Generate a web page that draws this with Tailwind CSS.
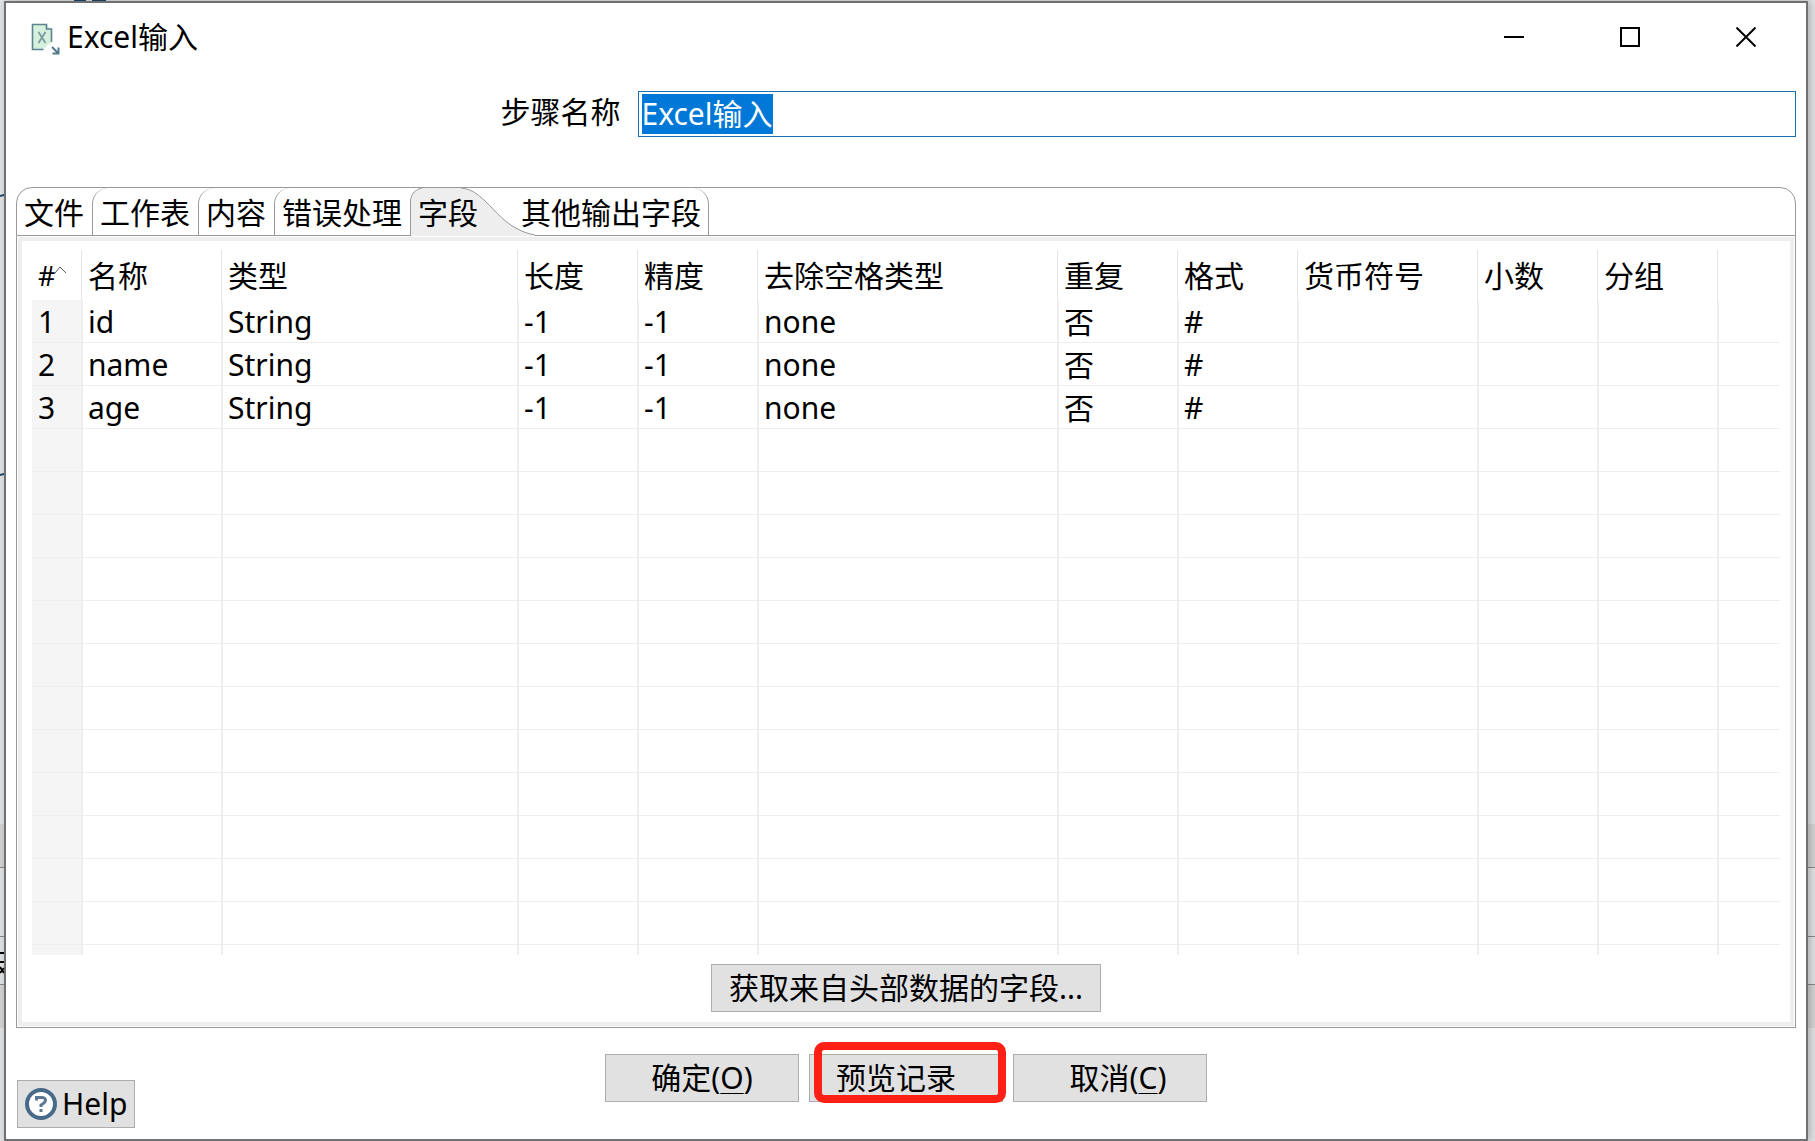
<!DOCTYPE html>
<html lang="zh-CN">
<head>
<meta charset="utf-8">
<title>Excel输入</title>
<script src="https://cdn.jsdelivr.net/npm/@tailwindcss/browser@4"></script>
</head>
<body class="relative flex min-h-screen flex-col bg-[#e2e3e5] pt-px pr-[7px] pl-1 font-['Noto_Sans','Noto_Sans_CJK_SC',sans-serif] text-[30px] leading-[40px] text-black">
  <!-- Application behind the dialog -->
  <div class="absolute inset-0 overflow-hidden" aria-hidden="true">
    <div class="absolute top-0 left-[74px] flex gap-[6px]"><span class="h-1 w-3 bg-[#1c4668]"></span><span class="h-1 w-[14px] bg-[#1c4668]"></span></div>
    <div class="absolute inset-x-0 top-[824px] h-[44px] border-b border-[#8a8a8a] bg-[#d4d4d4]"></div>
    <div class="absolute inset-x-0 top-[936px] h-[49px] border-y border-[#8a8a8a]"></div>
    <div class="absolute inset-x-0 top-[985px] h-[43px] bg-[#d4d4d4]"></div>
    <svg class="absolute top-[190px] left-0 h-[290px] w-1" viewBox="0 0 4 290" fill="none" stroke="#1c4668" stroke-width="2"><path d="M0 6L4 5M0 285L4 284"/></svg>
    <svg class="absolute top-[948px] left-0 h-7 w-1" viewBox="0 0 4 28" fill="none" stroke="#000" stroke-width="2"><path d="M0 5H4M0 14H4M0 19L4 25M0 25L4 20"/></svg>
  </div>

  <main class="relative flex flex-1 flex-col border-2 border-[#707172] bg-white shadow-[2px_0_8px_rgba(0,0,0,0.25)]">
    <header class="flex h-[68px] items-center pr-[2px] pl-[25px]">
      <svg class="mt-1 h-8 w-8 shrink-0" viewBox="0 0 32 32" fill="none">
        <path d="M1.500 2H16L20.500 7V19L12.500 26H1.500Z" fill="#d5f0dc"/>
        <path d="M12.500 26.500H1.500V1.500H15.500V6H20.500V19" stroke="#5d8290" stroke-width="1.600"/>
        <path d="M7.500 9L14.500 20M14.500 9L7.500 20" stroke="#7d9a9f" stroke-width="1.800"/>
        <path d="M21 24L27 30M27.500 24.500V30.500H21.500" stroke="#54798c" stroke-width="2"/>
      </svg>
      <h1 class="ml-1 flex-1">Excel输入</h1>
      <div class="flex">
        <button aria-label="最小化" class="flex h-[68px] w-[116px] items-center justify-center"><svg class="h-5 w-5" viewBox="0 0 20 20"><path d="M0 10H20" stroke="#000" stroke-width="2"/></svg></button>
        <button aria-label="最大化" class="flex h-[68px] w-[116px] items-center justify-center"><svg class="h-5 w-5" viewBox="0 0 20 20"><path d="M1 1H19V19H1Z" fill="none" stroke="#000" stroke-width="2"/></svg></button>
        <button aria-label="关闭" class="flex h-[68px] w-[116px] items-center justify-center"><svg class="h-5 w-5" viewBox="0 0 20 20"><path d="M0.500 0.500L19.500 19.500M19.500 0.500L0.500 19.500" stroke="#000" stroke-width="2"/></svg></button>
      </div>
    </header>

    <div class="mt-5 flex items-center pr-[10px]">
      <label for="step" class="w-[35%] shrink-0 pr-3 pb-1 text-right">步骤名称</label>
      <div class="ml-[5px] min-w-0 flex-1 border border-[#1a6fb0] bg-white p-[2px]">
        <input id="step" type="text" value="Excel输入" autofocus class="block h-10 w-full px-px leading-[40px] outline-none selection:bg-[#0078d7] selection:text-white">
      </div>
    </div>

    <section class="mx-[10px] mt-[50px] flex flex-1 flex-col">
      <div role="tablist" class="flex h-[49px] rounded-t-2xl border border-[#999] whitespace-nowrap *:pt-[2px]">
        <button role="tab" class="w-[75px] pl-[7px] text-left">文件</button>
        <button role="tab" class="w-[106px] rounded-tl-2xl border-l border-[#999] pl-[7px] text-left">工作表</button>
        <button role="tab" class="w-[76px] rounded-tl-2xl border-l border-[#999] pl-[7px] text-left">内容</button>
        <button role="tab" class="w-[136px] rounded-tl-2xl border-l border-[#999] pl-[7px] text-left">错误处理</button>
        <button role="tab" aria-selected="true" class="relative w-[103px] pl-2 text-left">
          <svg class="absolute top-0 left-0 h-12 w-[125px]" viewBox="0 0 125 48" fill="none">
            <path d="M1 48V13Q2 3 12 0H51C78 2 86 40 125 47V48Z" fill="#eee"/>
            <path d="M0.500 47V12Q2 2 12 0M51 0C78 2 86 40 125 47" stroke="#999"/>
          </svg>
          <span class="relative">字段</span>
        </button>
        <button role="tab" class="w-[196px] rounded-tr-2xl border-r border-[#999] pl-2 text-left">其他输出字段</button>
      </div>

      <div role="tabpanel" class="flex flex-1 flex-col border-x border-b border-[#999] p-px">
        <div class="flex flex-1 flex-col items-center border-4 border-[#eee] px-[10px] pt-[9px] pb-[10px]">
          <table class="w-full table-fixed border-separate border-spacing-0 text-left">
            <colgroup>
              <col class="w-[50px]"><col class="w-[140px]"><col class="w-[296px]"><col class="w-[120px]"><col class="w-[120px]"><col class="w-[300px]"><col class="w-[120px]"><col class="w-[120px]"><col class="w-[180px]"><col class="w-[120px]"><col class="w-[120px]"><col>
            </colgroup>
            <thead>
              <tr class="h-[50px] *:border-r *:border-[#e5e5e5] *:p-0 *:pt-[2px] *:pl-[6px] *:font-normal *:last:border-r-0">
                <th><span class="flex items-center text-[27px]">#<svg class="mb-3 h-2 w-3" viewBox="0 0 12 8" fill="none"><path d="M0 7L5 1L11 7" stroke="#555"/></svg></span></th>
                <th>名称</th><th>类型</th><th>长度</th><th>精度</th><th>去除空格类型</th><th>重复</th><th>格式</th><th>货币符号</th><th>小数</th><th>分组</th><th></th>
              </tr>
            </thead>
            <tbody id="rows"></tbody>
          </table>
          <button class="mt-auto h-12 border border-[#adadad] bg-[#e1e1e1] px-[17px]">获取来自头部数据的字段...</button>
        </div>
      </div>
    </section>

    <footer class="relative flex h-[111px] justify-center gap-[10px] pt-[26px]">
      <button class="h-12 w-[194px] border border-[#adadad] bg-[#e1e1e1]">确定(<span class="underline decoration-1 underline-offset-4">O</span>)</button>
      <div class="relative">
        <button class="h-12 w-[194px] border border-[#adadad] bg-[#e1e1e1] pr-5">预览记录</button>
        <div class="pointer-events-none absolute -top-3 -right-[3px] h-[61px] w-[192px] rounded-[10px] border-8 border-[#ff2015]"></div>
      </div>
      <button class="h-12 w-[194px] border border-[#adadad] bg-[#e1e1e1] pl-4">取消(<span class="underline decoration-1 underline-offset-4">C</span>)</button>
      <button class="absolute bottom-[11px] left-[11px] flex h-12 items-center gap-[5px] border border-[#adadad] bg-[#e1e1e1] px-[7px]">
        <svg class="h-8 w-8" viewBox="0 0 32 32" fill="none"><circle cx="16" cy="16" r="14" fill="#fff" stroke="#47698a" stroke-width="4"/><path d="M11.500 12.500V9.500H15.500Q20.500 9 20.500 12.500Q20 15 16 17V19M16 21V24" stroke="#5a7893" stroke-width="3"/></svg>
        Help
      </button>
    </footer>
  </main>

<script>
  const data = [
    ['1', 'id', 'String', '-1', '-1', 'none', '否', '#'],
    ['2', 'name', 'String', '-1', '-1', 'none', '否', '#'],
    ['3', 'age', 'String', '-1', '-1', 'none', '否', '#'],
  ];
  const body = document.getElementById('rows');
  for (let r = 0; r < 16; r++) {
    const row = body.insertRow();
    row.className = r < 15 ? 'h-[43px]' : 'h-[10px]';
    for (let c = 0; c < 12; c++) {
      const cell = row.insertCell();
      cell.className = 'p-0 border-[#eee] ' + (r < 15 ? 'pt-[2px] border-b ' : '') + (c < 11 ? 'border-r ' : '') + (c === 0 ? 'pl-[6px] bg-[#f5f5f5]' : 'pl-[5px] border-l');
      cell.textContent = (data[r] || [])[c] || '';
    }
  }
  const step = document.getElementById('step');
  step.focus();
  step.select();
</script>
</body>
</html>
